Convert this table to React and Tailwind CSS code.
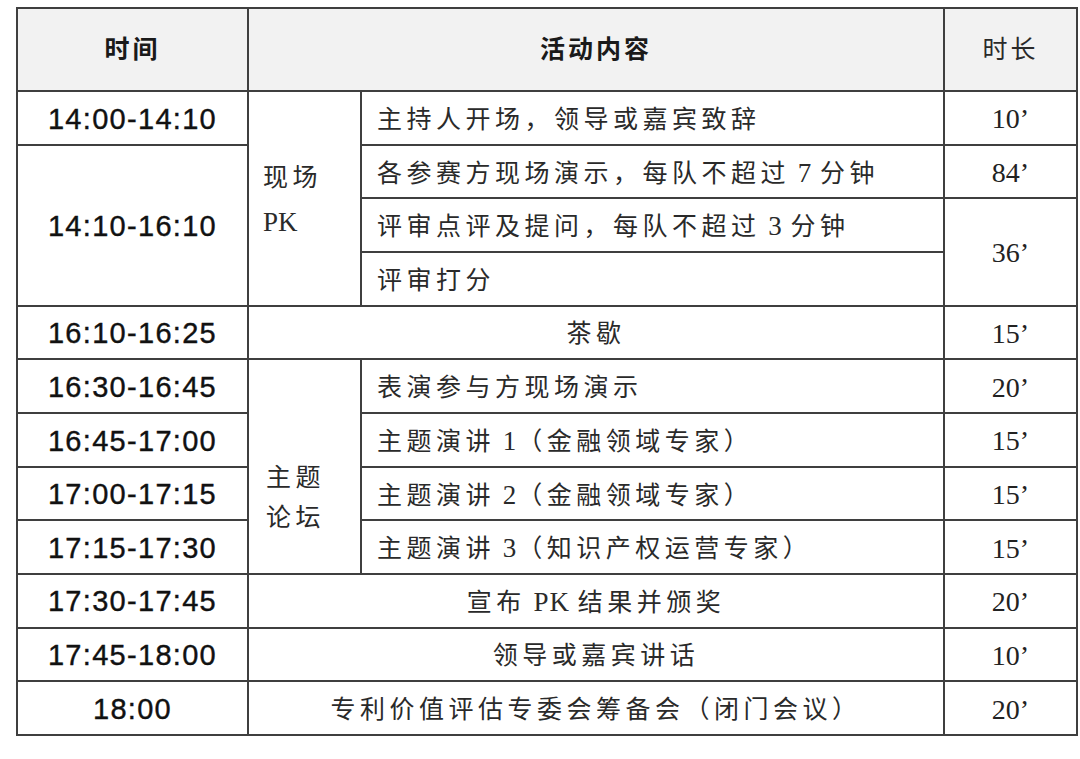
import React from "react";

const cell = "border-2 border-[#3f3f3f]";
const cjk = "font-['Liberation_Serif','Noto_Sans_CJK_SC',serif]";
const timeFont = "font-['Liberation_Sans','Noto_Sans_CJK_SC',sans-serif] text-[29px] tracking-[1.3px] text-[#111] [-webkit-text-stroke:0.4px_#111]";
const textCls = `${cjk} text-[25px] tracking-[4.5px] text-[#2a2a2a]`;
const durCls = "font-['Liberation_Serif',serif] text-[28px] text-[#222] text-center";

function Time({ children, rowSpan }) {
  return (
    <td rowSpan={rowSpan} className={`${cell} ${timeFont} text-center align-middle pt-[3px]`}>
      {children}
    </td>
  );
}

function Text({ children, colSpan, center }) {
  return (
    <td
      colSpan={colSpan}
      className={`${cell} ${textCls} align-middle pt-[3px] ${center ? "text-center" : "text-left pl-[15px]"}`}
    >
      {children}
    </td>
  );
}

function Dur({ children, rowSpan }) {
  return (
    <td rowSpan={rowSpan} className={`${cell} ${durCls} align-middle pt-[3px]`}>
      {children}
    </td>
  );
}

// latin pieces inside chinese lines, with their own surrounding spaces
function Num({ children, after = true }) {
  return (
    <span className="text-[27px] tracking-[1px]">
      {" "}
      {children}
      {after ? " " : ""}
    </span>
  );
}

export default function App() {
  const row = "h-[53.67px]";
  return (
    <div className="bg-white w-[1080px] h-[759px] pl-[16px] pt-[7px]">
      <table className="border-collapse table-fixed w-[1060px]">
        <colgroup>
          <col className="w-[231px]" />
          <col className="w-[113px]" />
          <col className="w-[583px]" />
          <col className="w-[133px]" />
        </colgroup>
        <tbody>
          <tr className="h-[83px] bg-[#f2f2f2]">
            <td className={`${cell} ${cjk} text-[25px] font-bold tracking-[3px] text-center text-[#1a1a1a]`}>时间</td>
            <td colSpan={2} className={`${cell} ${cjk} text-[25px] font-bold tracking-[3px] text-center text-[#1a1a1a]`}>
              活动内容
            </td>
            <td className={`${cell} ${cjk} text-[25px] tracking-[3px] text-center text-[#2a2a2a]`}>时长</td>
          </tr>
          <tr className={row}>
            <Time>14:00-14:10</Time>
            <td rowSpan={4} className={`${cell} ${textCls} align-middle pl-[14px] pt-[4px] leading-[44px]`}>
              现场
              <br />
              <span className="tracking-normal text-[27px]">PK</span>
            </td>
            <Text>主持人开场，领导或嘉宾致辞</Text>
            <Dur>10’</Dur>
          </tr>
          <tr className={row}>
            <Time rowSpan={3}>14:10-16:10</Time>
            <Text>
              各参赛方现场演示，每队不超过<Num>7</Num>分钟
            </Text>
            <Dur>84’</Dur>
          </tr>
          <tr className={row}>
            <Text>
              评审点评及提问，每队不超过<Num>3</Num>分钟
            </Text>
            <Dur rowSpan={2}>36’</Dur>
          </tr>
          <tr className={row}>
            <Text>评审打分</Text>
          </tr>
          <tr className={row}>
            <Time>16:10-16:25</Time>
            <Text colSpan={2} center>茶歇</Text>
            <Dur>15’</Dur>
          </tr>
          <tr className={row}>
            <Time>16:30-16:45</Time>
            <td rowSpan={4} className={`${cell} ${textCls} align-middle pl-[17px] pt-[62px] leading-[40px]`}>
              主题
              <br />
              论坛
            </td>
            <Text>表演参与方现场演示</Text>
            <Dur>20’</Dur>
          </tr>
          <tr className={row}>
            <Time>16:45-17:00</Time>
            <Text>
              主题演讲<Num after={false}>1</Num>（金融领域专家）
            </Text>
            <Dur>15’</Dur>
          </tr>
          <tr className={row}>
            <Time>17:00-17:15</Time>
            <Text>
              主题演讲<Num after={false}>2</Num>（金融领域专家）
            </Text>
            <Dur>15’</Dur>
          </tr>
          <tr className={row}>
            <Time>17:15-17:30</Time>
            <Text>
              主题演讲<Num after={false}>3</Num>（知识产权运营专家）
            </Text>
            <Dur>15’</Dur>
          </tr>
          <tr className={row}>
            <Time>17:30-17:45</Time>
            <Text colSpan={2} center>
              宣布<Num>PK</Num>结果并颁奖
            </Text>
            <Dur>20’</Dur>
          </tr>
          <tr className={row}>
            <Time>17:45-18:00</Time>
            <Text colSpan={2} center>领导或嘉宾讲话</Text>
            <Dur>10’</Dur>
          </tr>
          <tr className={row}>
            <Time>18:00</Time>
            <Text colSpan={2} center>专利价值评估专委会筹备会（闭门会议）</Text>
            <Dur>20’</Dur>
          </tr>
        </tbody>
      </table>
    </div>
  );
}
